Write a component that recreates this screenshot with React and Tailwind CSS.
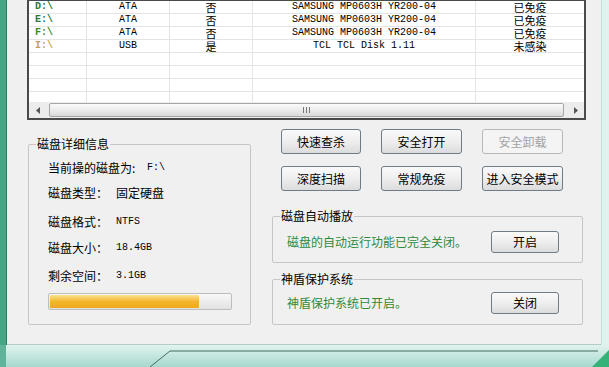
const rows = [
  { drive: 'D:\\', color: 'text-[#2c7a34]', bus: 'ATA', rm: '否', model: 'SAMSUNG MP0603H YR200-04', state: '已免疫' },
  { drive: 'E:\\', color: 'text-[#2c7a34]', bus: 'ATA', rm: '否', model: 'SAMSUNG MP0603H YR200-04', state: '已免疫' },
  { drive: 'F:\\', color: 'text-[#3a8a2c]', bus: 'ATA', rm: '否', model: 'SAMSUNG MP0603H YR200-04', state: '已免疫' },
  { drive: 'I:\\', color: 'text-[#c4a24a]', bus: 'USB', rm: '是', model: 'TCL TCL Disk 1.11', state: '未感染' },
  null,
  null,
  null,
  null,
]

const mono = "font-['Liberation_Mono',monospace] text-[10px]"
const cell = 'h-[13px] border-r border-b border-[#e4e4e4] flex items-center leading-[12px]'

function DriveList() {
  return (
    <div className="ml-[20px] mt-[-1px] w-[559px] border-2 border-[#4a4a4a] bg-white flex flex-col">
      <div className="h-[101px] overflow-hidden">
        {rows.map((r, i) => (
          <div key={i} className="grid grid-cols-[58px_83px_83px_223px_1fr]">
            <div className={`${cell} pl-[6px] ${mono} font-bold ${r ? r.color : ''}`}>{r?.drive}</div>
            <div className={`${cell} justify-center ${mono}`}>{r?.bus}</div>
            <div className={`${cell} justify-center text-[11px]`}>{r?.rm}</div>
            <div className={`${cell} justify-center ${mono}`}>{r?.model}</div>
            <div className={`${cell} justify-center text-[11px] border-r-0`}>{r?.state}</div>
          </div>
        ))}
      </div>
      <div className="h-[16px] bg-[#ececec] flex items-center px-[2px] gap-[4px]">
        <div className="w-[14px] flex justify-center">
          <svg width="5" height="7" viewBox="0 0 5 7"><path d="M4 0 L0 3.5 L4 7 Z" fill="#555" /></svg>
        </div>
        <div className="flex-1 h-[14px] rounded-[2px] border border-[#a6a6a6] bg-gradient-to-b from-[#fbfbfb] via-[#ececec] to-[#d9d9d9] flex items-center justify-center">
          <svg width="7" height="6" viewBox="0 0 7 6"><path d="M0.5 0v6M3.5 0v6M6.5 0v6" stroke="#777" strokeWidth="1" /></svg>
        </div>
        <div className="w-[14px] flex justify-center">
          <svg width="5" height="7" viewBox="0 0 5 7"><path d="M1 0 L5 3.5 L1 7 Z" fill="#555" /></svg>
        </div>
      </div>
    </div>
  )
}

function Btn({ children, disabled, className = '' }) {
  return (
    <button
      className={`rounded-[3px] border text-[12px] leading-none flex items-center justify-center ${
        disabled
          ? 'border-[#b5b9bc] bg-[#f4f4f4] text-[#a3a3a3]'
          : 'border-[#6f7b86] bg-gradient-to-b from-[#fafafa] via-[#eeeeee] to-[#dcdcdc] text-black'
      } ${className}`}
    >
      {children}
    </button>
  )
}

function Info({ label, children, mt, wide }) {
  return (
    <div className={`flex items-center leading-[14px] text-[12px] ${mt}`}>
      <span className={wide ? 'w-[99px]' : 'w-[68px]'}>{label}</span>
      {children}
    </div>
  )
}

export default function App() {
  return (
    <div className="w-[609px] h-[367px] overflow-hidden flex flex-col bg-[#d6efea] font-['Noto_Sans_CJK_SC','Liberation_Sans',sans-serif] text-black">
      <div className="h-[345px] flex">
        <div className="w-[7px] bg-[#45a585] border-r border-[#2a7e63]" />
        <div className="flex-1 bg-[#f0f0f0] border-b border-[#b4ccc5] flex flex-col">
          <DriveList />
          <div className="flex">
            <fieldset className="ml-[21px] mt-[17px] w-[223px] border border-[#c6c6c6] rounded-[2px] px-0 pb-[14px]">
              <legend className="ml-[7px] px-[1px] text-[12px] leading-[14px]">磁盘详细信息</legend>
              <div className="pl-[19px] flex flex-col">
                <Info label="当前操的磁盘为:" wide mt="mt-[10px]">
                  <span className={mono}>F:\</span>
                </Info>
                <Info label="磁盘类型：" mt="mt-[11px]">固定硬盘</Info>
                <Info label="磁盘格式：" mt="mt-[15px]">
                  <span className={mono}>NTFS</span>
                </Info>
                <Info label="磁盘大小：" mt="mt-[12px]">
                  <span className={mono}>18.4GB</span>
                </Info>
                <Info label="剩余空间：" mt="mt-[14px]">
                  <span className={mono}>3.1GB</span>
                </Info>
                <div className="mt-[10px] w-[184px] h-[17px] border border-[#bdbdbd] rounded-[2px] bg-gradient-to-b from-[#f8f8f8] to-[#e2e2e2] p-[1px]">
                  <div className="w-[149px] h-full rounded-[1px] bg-gradient-to-b from-[#fbe08a] via-[#f4b628] to-[#f0a81c]" />
                </div>
              </div>
            </fieldset>
            <div className="ml-[21px] w-[311px] flex flex-col">
              <div className="mt-[9px] pl-[9px] grid grid-cols-[80px_81px_81px] gap-x-[20px] gap-y-[12px]">
                <Btn className="h-[25px]">快速查杀</Btn>
                <Btn className="h-[25px]">安全打开</Btn>
                <Btn className="h-[25px]" disabled>安全卸载</Btn>
                <Btn className="h-[25px]">深度扫描</Btn>
                <Btn className="h-[25px]">常规免疫</Btn>
                <Btn className="h-[25px]">进入安全模式</Btn>
              </div>
              <fieldset className="mt-[18px] border border-[#c6c6c6] rounded-[2px] px-0 pb-[9px]">
                <legend className="ml-[7px] px-[1px] text-[12px] leading-[14px]">磁盘自动播放</legend>
                <div className="mt-[8px] pl-[14px] pr-[23px] flex items-center justify-between">
                  <span className="text-[12px] text-[#2f8a3a]">磁盘的自动运行功能已完全关闭。</span>
                  <Btn className="w-[68px] h-[22px]">开启</Btn>
                </div>
              </fieldset>
              <fieldset className="mt-[9px] border border-[#c6c6c6] rounded-[2px] px-0 pb-[10px]">
                <legend className="ml-[7px] px-[1px] text-[12px] leading-[14px]">神盾保护系统</legend>
                <div className="mt-[6px] pl-[14px] pr-[23px] flex items-center justify-between">
                  <span className="text-[12px] text-[#2f8a3a]">神盾保护系统已开启。</span>
                  <Btn className="w-[68px] h-[22px]">关闭</Btn>
                </div>
              </fieldset>
            </div>
          </div>
        </div>
        <div className="w-[8px] bg-[#dff2ee] border-l border-[#bfe0d8]" />
      </div>
      <div className="relative flex-1 bg-gradient-to-b from-[#e2f3ef] via-[#c4e6df] to-[#a6d8ce] border-l-[6px] border-[#5fb39a]">
        <svg className="absolute inset-0" width="609" height="22" viewBox="0 0 609 22">
          <polyline points="144,22 164,6 592,6" fill="none" stroke="#3f6a62" strokeWidth="1" />
          <polygon points="586,22 603,5 603,22" fill="#35b277" />
        </svg>
      </div>
    </div>
  )
}
